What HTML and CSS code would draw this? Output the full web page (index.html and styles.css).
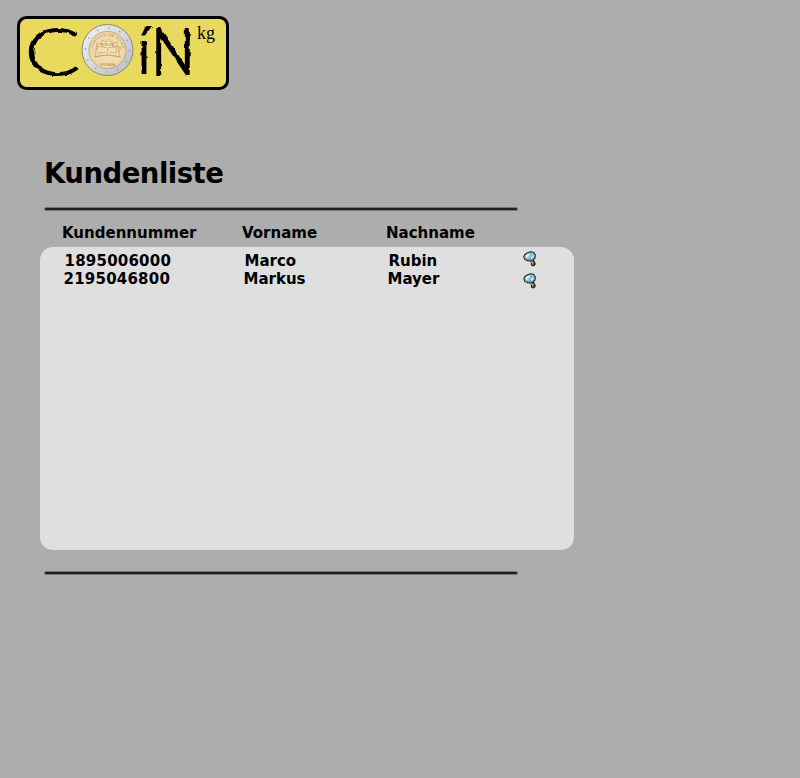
FILE: index.html
```html
<!DOCTYPE html>
<html lang="de">
<head>
<meta charset="utf-8">
<title>Kundenliste</title>
<link rel="stylesheet" href="styles.css">
</head>
<body>
<svg class="symbols" aria-hidden="true">
  <symbol id="lens" viewBox="0 0 14 16">
    <path d="M8 9.5 L11 9.5 L12.5 13 L11 15 L8.5 14.5 Z" fill="#6b4a38" stroke="#16100c" stroke-width=".8"/>
    <path d="M8 9.5 l2 3" stroke="#d0a37c" stroke-width="1.5"/>
    <path d="M4 2 L7.5 .8 L10.5 1.2 L12.3 4 L12 7 L9.5 9.6 L5 10 L1.7 8.4 L.8 5.8 L1.8 3.6 Z" fill="#8fbdcb" stroke="#182f38" stroke-width="1.1"/>
    <path d="M2.7 5.8 Q3.5 2.8 7 2.6 L5.5 5.8 L3.2 7 Z" fill="#def5fa"/>
    <path d="M7.5 6.5 L10.5 3.5 L10.3 6.7 L8 8 Z" fill="#c4e6ef"/>
    <path d="M3 8 Q6 9.5 9 8" fill="none" stroke="#4e8ba0" stroke-width=".8"/>
  </symbol>
</svg>
<header>
  <svg class="logo" viewBox="17 16 212 74" width="212" height="74">
    <defs>
      <radialGradient id="gold"><stop offset="0" stop-color="#f6e4bd"/><stop offset="1" stop-color="#efd5a0"/></radialGradient>
      <linearGradient id="silver" x2="1" y2="1"><stop offset="0" stop-color="#f2f2f2"/><stop offset=".5" stop-color="#d9dada"/><stop offset="1" stop-color="#b6b8b9"/></linearGradient>
      <filter id="rough" x="-10%" y="-10%" width="120%" height="120%">
        <feTurbulence type="fractalNoise" baseFrequency=".14" numOctaves="2" seed="4" result="noise"/>
        <feDisplacementMap in="SourceGraphic" in2="noise" scale="3" xChannelSelector="R" yChannelSelector="G"/>
      </filter>
      <path id="arc-top" d="M92.500 51a15 15 0 0 1 30 0"/>
    </defs>
    <rect x="18.500" y="17.500" width="209" height="71" rx="8" fill="#e9da5d" stroke="#000" stroke-width="3"/>
    <text class="letter light" x="24.500" y="75" textLength="56" lengthAdjust="spacingAndGlyphs">C</text>
    <circle cx="107.500" cy="50" r="25.500" fill="url(#silver)" stroke="#858786"/>
    <circle cx="107.500" cy="50" r="22" fill="none" stroke="#9da1a2" stroke-width="1.500" stroke-dasharray="1.500 10"/>
    <circle cx="107.500" cy="50" r="18.600" fill="url(#gold)" stroke="#aaa08a" stroke-width=".8"/>
    <path d="M94 50l4-2-2-4 5 0 1-4 4 2 3-3 3 4 5-1 0 4 4 2-3 4M97 46l-2 11 12-2 13 2-2-11-10 2ZM108 48l-1 7M98 53l8-1M109 52l8 1M112 47l4 0 0 6M94 57q13-4 27 0" fill="none" stroke="#b99863" stroke-width=".6"/>
    <text class="coin-text"><textPath href="#arc-top" startOffset="3" textLength="41">TRATADO DE ROMA</textPath></text>
    <text class="coin-text" x="101" y="45.500" textLength="13">EUROPA</text>
    <text class="coin-text" x="100" y="65.500" textLength="15">ESPAÑA</text>
    <text class="letter" x="137.500" y="74" textLength="13" lengthAdjust="spacingAndGlyphs">í</text>
    <text class="letter narrow" x="151" y="75" textLength="44" lengthAdjust="spacingAndGlyphs">N</text>
    <text class="suffix" x="197" y="38.500" textLength="18" lengthAdjust="spacingAndGlyphs">kg</text>
  </svg>
</header>
<main>
  <h1>Kundenliste</h1>
  <hr>
  <div class="row head"><span>Kundennummer</span><span>Vorname</span><span>Nachname</span></div>
  <section class="panel">
    <div class="row first"><span class="number">1895006000</span><span>Marco</span><span>Rubin</span><svg class="icon"><use href="#lens"/></svg></div>
    <div class="row second"><span class="number">2195046800</span><span>Markus</span><span>Mayer</span><svg class="icon"><use href="#lens"/></svg></div>
  </section>
  <hr>
</main>
</body>
</html>
```
FILE: styles.css
```css
body {
  margin: 0;
  min-height: 778px;
  background: #adadad;
  color: #000;
  font-family: Verdana, "DejaVu Sans", sans-serif;
}
.symbols { display: none; }
header { padding: 16px 0 0 17px; }
.logo { display: block; overflow: visible; }
.letter {
  font: 400 66px Lato, sans-serif;
  filter: url(#rough);
}
.light { font-weight: 300; stroke: #000; stroke-width: 1px; }
.narrow { font-size: 65px; }
.suffix { font: 19px "Liberation Serif", serif; }
.coin-text { font: 3.5px "Liberation Sans", sans-serif; fill: #a98a58; }
main { padding: 66px 0 0 40px; width: 534px; }
h1 {
  margin: 0 0 0 4px;
  height: 51px;
  font-size: 27.5px;
  line-height: 34px;
  letter-spacing: -0.5px;
}
hr {
  box-sizing: border-box;
  width: 474px;
  height: 4px;
  margin: 0 0 0 4.4px;
  border: 1px solid #777;
  border-radius: 2px;
  background: #202020;
}
.row {
  display: grid;
  grid-template-columns: 180px 144px 136px 14px;
  height: 18px;
  font-size: 15px;
  font-weight: bold;
  line-height: 18px;
}
.number { letter-spacing: 0.22px; }
.head { margin: 13px 0 5px 22px; }
.panel {
  box-sizing: border-box;
  height: 303px;
  margin-bottom: 21px;
  padding-top: 5px;
  border-radius: 13px;
  background: #dfdfdf;
}
.first { margin-left: 24.500px; }
.second { margin-left: 23.500px; }
.icon { width: 14px; height: 16px; }
.first .icon { margin: -1px 0 0 -1.5px; }
.second .icon { margin: 3px 0 0 -0.5px; }
```
